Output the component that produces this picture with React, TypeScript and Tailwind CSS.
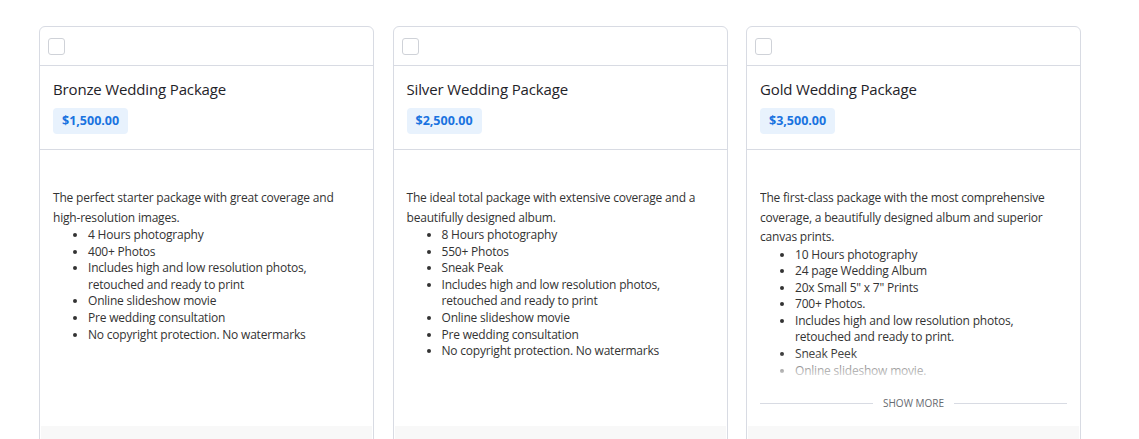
const packages = [
  {
    title: 'Bronze Wedding Package',
    price: '$1,500.00',
    intro: 'The perfect starter package with great coverage and high-resolution images.',
    items: [
      '4 Hours photography',
      '400+ Photos',
      'Includes high and low resolution photos, retouched and ready to print',
      'Online slideshow movie',
      'Pre wedding consultation',
      'No copyright protection. No watermarks',
    ],
    clamp: false,
  },
  {
    title: 'Silver Wedding Package',
    price: '$2,500.00',
    intro: 'The ideal total package with extensive coverage and a beautifully designed album.',
    items: [
      '8 Hours photography',
      '550+ Photos',
      'Sneak Peak',
      'Includes high and low resolution photos, retouched and ready to print',
      'Online slideshow movie',
      'Pre wedding consultation',
      'No copyright protection. No watermarks',
    ],
    clamp: false,
  },
  {
    title: 'Gold Wedding Package',
    price: '$3,500.00',
    intro: 'The first-class package with the most comprehensive coverage, a beautifully designed album and superior canvas prints.',
    items: [
      '10 Hours photography',
      '24 page Wedding Album',
      '20x Small 5" x 7" Prints',
      '700+ Photos.',
      'Includes high and low resolution photos, retouched and ready to print.',
      'Sneak Peek',
      'Online slideshow movie.',
      'Pre wedding consultation',
      'No copyright protection. No watermarks',
    ],
    clamp: true,
  },
];

type Pkg = (typeof packages)[number];

function PackageCard({ pkg }: { pkg: Pkg }) {
  return (
    <div className="w-[335px] flex flex-col border border-[#d8dbe3] rounded-[6px] bg-white overflow-hidden">
      {/* select row */}
      <div className="h-[39px] px-[8px] pt-[11px] border-b border-[#d8dbe3]">
        <div className="w-[17px] h-[17px] rounded-[3px] border border-[#cfd2d8] bg-white" />
      </div>

      {/* title + price */}
      <div className="px-[13px] pt-[13px] pb-[15px] border-b border-[#d8dbe3]">
        <h3 className="text-[15px] leading-[20px] tracking-[-0.15px] text-[#1f2329]">{pkg.title}</h3>
        <span className="inline-block mt-[9px] px-[9px] h-[26px] leading-[26px] rounded-[4px] bg-[#e8f2fd] text-[#1a73e0] text-[12.5px] font-bold">
          {pkg.price}
        </span>
      </div>

      {/* description */}
      <div className="px-[13px] pt-[38px] text-[12px] tracking-[-0.2px] text-[#333333]">
        <div className={pkg.clamp ? 'relative max-h-[190px] overflow-hidden' : ''}>
          <p className="leading-[19.5px]">{pkg.intro}</p>
          <ul className="list-disc pl-[35px] leading-[16.6px]">
            {pkg.items.map((item) => (
              <li key={item}>{item}</li>
            ))}
          </ul>
          {pkg.clamp && (
            <div className="absolute left-0 right-0 bottom-0 h-[26px] bg-gradient-to-b from-white/0 to-white/85" />
          )}
        </div>
        {pkg.clamp && (
          <div className="flex items-center gap-[10px] mt-[17px]">
            <div className="flex-1 h-px bg-[#d8dbe3]" />
            <span className="text-[10px] leading-[16px] tracking-normal text-[#666a70] uppercase">Show more</span>
            <div className="flex-1 h-px bg-[#d8dbe3]" />
          </div>
        )}
      </div>

      <div className="mt-auto pt-[15px]">
        <div className="mx-px h-[40px] bg-[#f8f8f8]" />
      </div>
    </div>
  );
}

export default function App() {
  return (
    <div className="w-[1139px] h-[439px] overflow-hidden bg-white font-['Open_Sans',sans-serif]">
      <div className="flex items-stretch gap-[18.5px] pl-[39px] pt-[26px]">
        {packages.map((pkg) => (
          <PackageCard key={pkg.title} pkg={pkg} />
        ))}
      </div>
    </div>
  );
}
